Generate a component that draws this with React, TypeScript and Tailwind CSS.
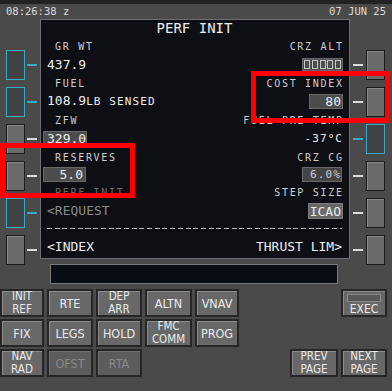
import React from "react";

const LEFT = [true, true, false, false, true, false];
const RIGHT = [false, false, true, false, false, false];

function Lsk({ cyan, side }: { cyan: boolean; side: "l" | "r" }) {
  const btn = cyan
    ? "w-[19px] h-[30px] border-[1.5px] border-[#3aaac4] bg-[#404244]"
    : "w-[19px] h-[30px] border-[1.5px] border-[#1c1c1c] bg-[#6b6b6b] shadow-[inset_1px_1px_0_#8a8a8a]";
  const dash = cyan ? "w-[10px] h-[1.5px] bg-[#3aaac4]" : "w-[10px] h-[2px] bg-[#dcdcdc]";
  if (side === "l") {
    return (
      <div className="h-[30px] flex items-center gap-[2px]">
        <div className={btn} />
        <div className={dash} />
      </div>
    );
  }
  return (
    <div className="h-[30px] flex items-center gap-[3px]">
      <div className={dash} />
      <div className={btn} />
    </div>
  );
}

function Label({ children, right, dim }: { children: React.ReactNode; right?: boolean; dim?: boolean }) {
  return (
    <span
      className={
        "text-[10px] tracking-[1.7px] " +
        (dim ? "text-[#6c6c6c] " : "text-[#cfcfcf] ") +
        (right ? "mr-[-1.7px]" : "pl-[8px]")
      }
    >
      {children}
    </span>
  );
}

function LabelLine({ children }: { children: React.ReactNode }) {
  return <div className="h-[15px] leading-[15px] flex justify-between items-center">{children}</div>;
}

function DataLine({ children }: { children: React.ReactNode }) {
  return (
    <div className="h-[22px] leading-[22px] flex justify-between items-center text-[13px] text-[#ededed]">
      {children}
    </div>
  );
}

function Box({ children, className }: { children: React.ReactNode; className?: string }) {
  return (
    <span className={"inline-block h-[15px] leading-[14px] bg-[#4c4c4c] border border-[#686868] " + (className ?? "")}>
      {children}
    </span>
  );
}

function Key({ lines, dim }: { lines: string[]; dim?: boolean }) {
  const two = lines.length > 1;
  return (
    <div
      className={
        "h-[28px] flex flex-col items-center justify-center border-2 border-[#262626] " +
        (two ? "text-[11.5px] " : "text-[12.5px] ") +
        (dim
          ? "bg-[#5c5c5c] text-[#8a8a8a] shadow-[inset_1px_1px_0_#6e6e6e]"
          : "bg-[#686868] text-[#ebebeb] shadow-[inset_1px_1px_0_#8c8c8c]")
      }
    >
      {lines.map((l) => (
        <div key={l} className={two ? "shrink-0 h-[13.5px] leading-[13.5px]" : "leading-[15px]"}>
          {l}
        </div>
      ))}
    </div>
  );
}

export default function App() {
  return (
    <div className="relative w-[392px] h-[391px] overflow-hidden bg-[#4a4a4a] select-none">
      {/* header */}
      <div className="h-[19px] border-t-[4px] border-[#222222] flex justify-between px-[6px] leading-[14px] text-[10.5px] text-[#dadada] font-['DejaVu_Sans_Mono','Liberation_Mono',monospace]">
        <span>08:26:38 z</span>
        <span>07 JUN 25</span>
      </div>

      {/* middle */}
      <div className="flex h-[240px]">
        <div className="w-[40px] shrink-0 pl-[6px] pt-[31px] flex flex-col gap-[7px]">
          {LEFT.map((c, i) => (
            <Lsk key={i} cyan={c} side="l" />
          ))}
        </div>

        <div className="w-[310px] h-[240px] shrink-0 border border-[#707070] bg-[#0d0f14] overflow-hidden pl-[6px] pr-[7px] flex flex-col font-['DejaVu_Sans_Mono','Liberation_Mono',monospace]">
          <div className="h-[20px] leading-[16px] text-center text-[14px] text-[#ededed]">PERF INIT</div>

          <LabelLine>
            <Label>GR WT</Label>
            <Label right>CRZ ALT</Label>
          </LabelLine>
          <DataLine>
            <span>437.9</span>
            <span className="inline-flex items-center gap-[1.7px] h-[13px] px-[1px] bg-[#4c4c4c] border border-[#686868] mr-[-1px]">
              {[0, 1, 2, 3, 4].map((i) => (
                <span key={i} className="w-[6px] h-[9px] border border-[#c8c8c8]" />
              ))}
            </span>
          </DataLine>

          <LabelLine>
            <Label>FUEL</Label>
            <Label right>COST INDEX</Label>
          </LabelLine>
          <DataLine>
            <span>
              108.9<span className="text-[11px] tracking-[1.1px]">LB SENSED</span>
            </span>
            <Box className="w-[34px] text-right mr-[-1px] pr-[1px]">80</Box>
          </DataLine>

          <LabelLine>
            <Label>ZFW</Label>
            <Label right>FUEL PRE TEMP</Label>
          </LabelLine>
          <DataLine>
            <Box className="ml-[-4px] w-[44px] pl-[3px]">329.0</Box>
            <span className="text-[11px] tracking-[1.1px] mr-[-1.1px]">-37°C</span>
          </DataLine>

          <LabelLine>
            <Label>RESERVES</Label>
            <Label right>CRZ CG</Label>
          </LabelLine>
          <DataLine>
            <Box className="ml-[-4px] w-[43px] text-right pr-[2px]">5.0</Box>
            <Box className="w-[40px] text-right text-[11px] tracking-[1.1px] text-[#d0d0d0] bg-[#444444]">6.0%</Box>
          </DataLine>

          <LabelLine>
            <Label dim>PERF INIT</Label>
            <Label right>STEP SIZE</Label>
          </LabelLine>
          <DataLine>
            <span className="text-[#8a8a8a]">&lt;REQUEST</span>
            <span className="inline-block h-[16px] leading-[15px] px-[1px] bg-[#686868] border border-[#7c7c7c] mr-[-1px]">ICAO</span>
          </DataLine>

          <div className="h-[15px] flex items-center">
            <div className="w-full h-[1.5px] mb-[1px] bg-[repeating-linear-gradient(90deg,#bdbdbd_0_5px,transparent_5px_7.7px)]" />
          </div>
          <DataLine>
            <span>&lt;INDEX</span>
            <span>THRUST LIM&gt;</span>
          </DataLine>
        </div>

        <div className="w-[42px] shrink-0 pl-[3px] pt-[31px] flex flex-col gap-[7px]">
          {RIGHT.map((c, i) => (
            <Lsk key={i} cyan={c} side="r" />
          ))}
        </div>
      </div>

      {/* scratchpad */}
      <div className="h-[29px] pt-[5px] pl-[50px]">
        <div className="w-[288px] h-[20px] bg-[#0a0c14] border border-[#7a7a7a]" />
      </div>

      {/* keys */}
      <div className="pt-[1px] grid grid-cols-[44px_46px_46px_47px_44px_45px_48px_46px] gap-x-[3px] gap-y-[2px] font-['DejaVu_Sans_Condensed','DejaVu_Sans',sans-serif] font-stretch-condensed">
        <Key lines={["INIT", "REF"]} />
        <Key lines={["RTE"]} />
        <Key lines={["DEP", "ARR"]} />
        <Key lines={["ALTN"]} />
        <Key lines={["VNAV"]} />
        <div />
        <div />
        <div className="h-[28px] flex flex-col items-center justify-start pt-[3px] border-2 border-[#262626] bg-[#686868] text-[#ebebeb] text-[12px] shadow-[inset_1px_1px_0_#8c8c8c]">
          <div className="shrink-0 w-[34px] h-[8px] bg-[#575757] border border-[#8a8a8a]" />
          <div className="leading-[14px]">EXEC</div>
        </div>

        <Key lines={["FIX"]} />
        <Key lines={["LEGS"]} />
        <Key lines={["HOLD"]} />
        <Key lines={["FMC", "COMM"]} />
        <Key lines={["PROG"]} />
        <div />
        <div />
        <div />

        <Key lines={["NAV", "RAD"]} />
        <Key lines={["OFST"]} dim />
        <Key lines={["RTA"]} dim />
        <div />
        <div />
        <div />
        <Key lines={["PREV", "PAGE"]} />
        <Key lines={["NEXT", "PAGE"]} />
      </div>

      {/* annotation boxes */}
      <div className="absolute left-0 top-[143px] w-[135px] h-[55px] border-[5px] border-[#ff0000]" />
      <div className="absolute left-[251px] top-[71px] w-[139px] h-[52px] border-[5px] border-[#ff0000]" />
    </div>
  );
}
